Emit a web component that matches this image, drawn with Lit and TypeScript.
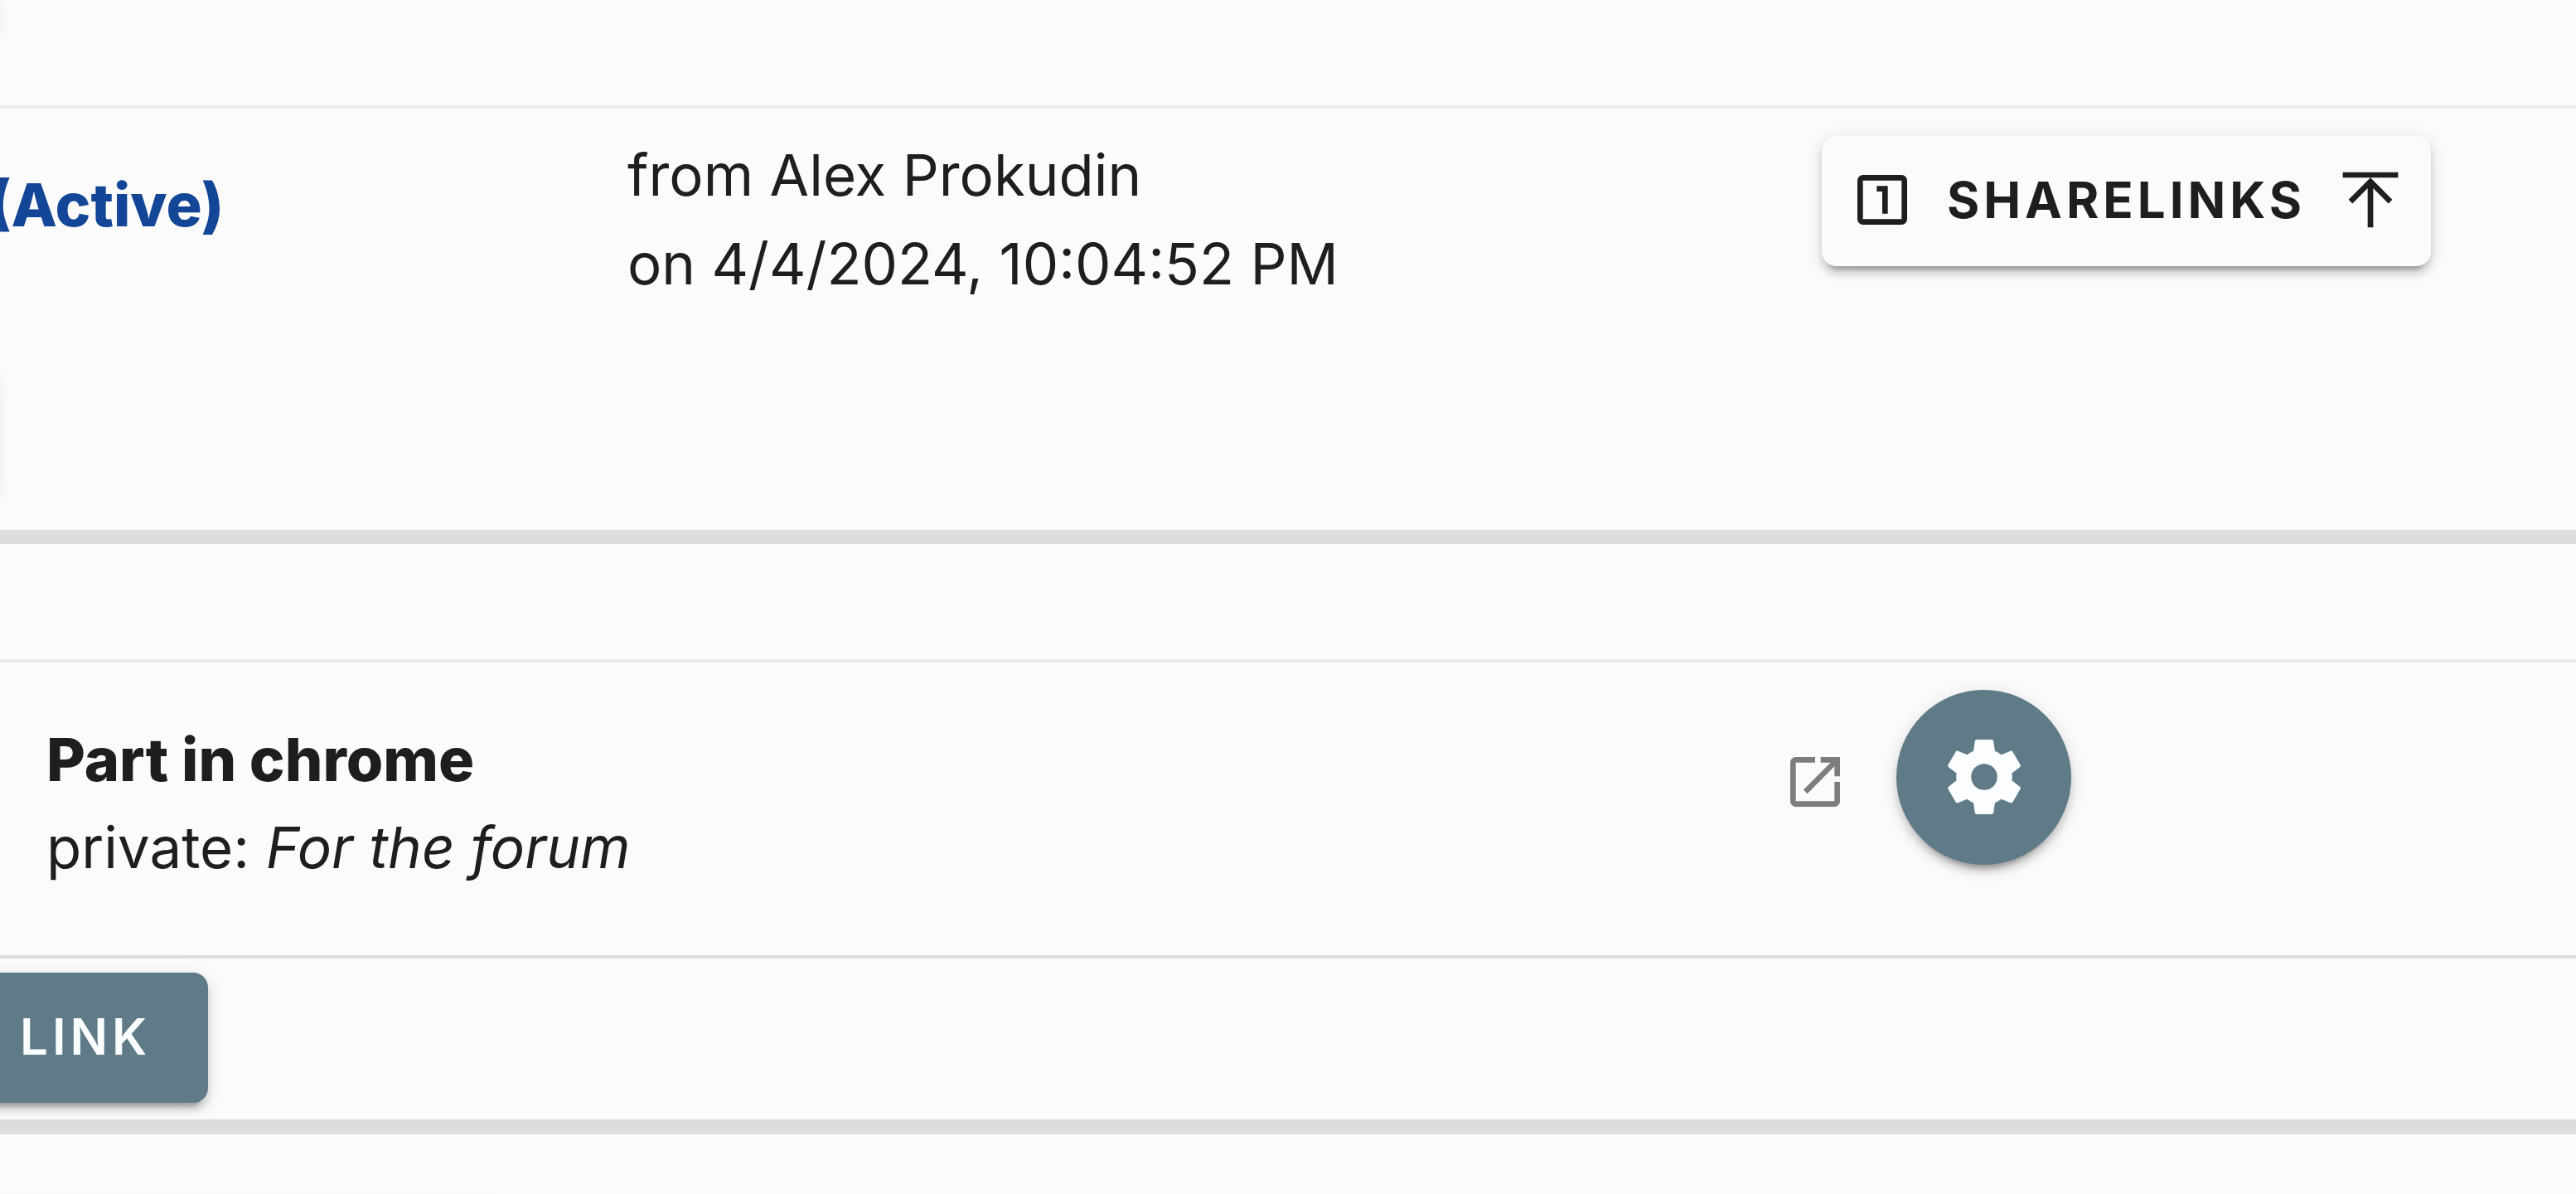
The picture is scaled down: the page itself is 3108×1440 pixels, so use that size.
import { LitElement, html, css, svg } from "lit";
import { customElement, property } from "lit/decorators.js";

const ICONS: Record<string, string> = {
  numeric: "M12,17V9H10V7H14V17H12M19,3A2,2 0 0,1 21,5V19A2,2 0 0,1 19,21H5A2,2 0 0,1 3,19V5A2,2 0 0,1 5,3H19M5,5V19H19V5H5Z",
  collapseUp: "M4.08,11.92L12,4L19.92,11.92L18.5,13.33L13,7.83V22H11V7.83L5.5,13.33L4.08,11.92M12,4H22V2H2V4H12Z",
  openInNew: "M14,3V5H17.59L7.76,14.83L9.17,16.24L19,6.41V10H21V3M19,19H5V5H12V3H5C3.89,3 3,3.9 3,5V19A2,2 0 0,0 5,21H19A2,2 0 0,0 21,19V12H19V19Z",
  cog: "M12,15.5A3.5,3.5 0 0,1 8.5,12A3.5,3.5 0 0,1 12,8.5A3.5,3.5 0 0,1 15.5,12A3.5,3.5 0 0,1 12,15.5M19.43,12.97C19.47,12.65 19.5,12.33 19.5,12C19.5,11.67 19.47,11.34 19.43,11L21.54,9.37C21.73,9.22 21.78,8.95 21.66,8.73L19.66,5.27C19.54,5.05 19.27,4.96 19.05,5.05L16.56,6.05C16.04,5.66 15.5,5.32 14.87,5.07L14.5,2.42C14.46,2.18 14.25,2 14,2H10C9.75,2 9.54,2.18 9.5,2.42L9.13,5.07C8.5,5.32 7.96,5.66 7.44,6.05L4.95,5.05C4.73,4.96 4.46,5.05 4.34,5.27L2.34,8.73C2.21,8.95 2.27,9.22 2.46,9.37L4.57,11C4.53,11.34 4.5,11.67 4.5,12C4.5,12.33 4.53,12.65 4.57,12.97L2.46,14.63C2.27,14.78 2.21,15.05 2.34,15.27L4.34,18.73C4.46,18.95 4.73,19.03 4.95,18.95L7.44,17.94C7.96,18.34 8.5,18.68 9.13,18.93L9.5,21.58C9.54,21.82 9.75,22 10,22H14C14.25,22 14.46,21.82 14.5,21.58L14.87,18.93C15.5,18.67 16.04,18.34 16.56,17.94L19.05,18.95C19.27,19.03 19.54,18.95 19.66,18.73L21.66,15.27C21.78,15.05 21.73,14.78 21.54,14.63L19.43,12.97Z",
};

@customElement("mdi-icon")
export class MdiIcon extends LitElement {
  @property() name = "";

  static styles = css`
    :host {
      display: block;
      width: 80px;
      height: 80px;
      flex: none;
    }
    .glyph {
      display: block;
      width: 100%;
      height: 100%;
      fill: currentColor;
    }
  `;

  render() {
    return html`<svg class="glyph" viewBox="0 0 24 24" aria-hidden="true">
      ${svg`<path d=${ICONS[this.name] ?? ""} />`}
    </svg>`;
  }
}

@customElement("app-root")
export class AppRoot extends LitElement {
  static styles = css`
    :host {
      --surface: #fbfbfb;
      --ink: #1e1e1e;
      --accent: #5f7b87;
      --hairline: #ececec;
      --divider: #dddddd;
      --raised: 0 13px 4px -9px rgba(0, 0, 0, 0.2), 0 9px 9px 0 rgba(0, 0, 0, 0.14),
        0 4px 22px 0 rgba(0, 0, 0, 0.12);
      display: flex;
      flex-direction: column;
      min-height: 100vh;
      overflow: hidden;
      background: var(--surface);
      color: var(--ink);
      font: 400 69px/107px Inter, Roboto, sans-serif;
    }
    .head {
      box-sizing: border-box;
      border-bottom: 4px solid var(--hairline);
    }
    .head-first {
      height: 131px;
    }
    .head-next {
      height: 143px;
    }
    /* Raised surfaces that begin beyond the left edge */
    .edge {
      width: 160px;
      height: 153px;
      margin-left: -166px;
      border-radius: 18px;
      background: var(--surface);
      box-shadow: var(--raised);
    }
    .edge-top {
      height: 40px;
      border-radius: 0 0 18px 18px;
    }
    .request {
      display: grid;
      grid-template-columns: 757fr 1441fr 910fr;
      align-items: start;
      padding-bottom: 39px;
      border-bottom: 17px solid var(--divider);
    }
    .state {
      display: grid;
      gap: 147px;
      padding-top: 62px;
    }
    .status {
      margin-left: -14px;
      color: #134696;
      font-size: 72px;
      font-weight: 800;
    }
    .meta {
      margin: 0;
      padding-top: 27px;
    }
    .btn {
      display: flex;
      align-items: center;
      height: 157px;
      margin: 0;
      padding: 0 33px 3px;
      border: 0;
      border-radius: 18px;
      background: var(--surface);
      box-shadow: var(--raised);
      color: var(--ink);
      font: 700 60px/72px Inter, Roboto, sans-serif;
      letter-spacing: 5px;
      white-space: nowrap;
    }
    .share {
      gap: 38px;
      justify-self: start;
      margin-top: 33px;
    }
    .part {
      display: grid;
      grid-template-columns: 2150fr 958fr;
      align-items: start;
      border-bottom: 4px solid var(--divider);
    }
    .about {
      margin: 0;
      padding: 64px 0 77px 56px;
      line-height: 105px;
    }
    .title {
      font-size: 72px;
      font-weight: 800;
    }
    .tools {
      display: flex;
      align-items: center;
      gap: 58px;
      padding-top: 33px;
    }
    .open {
      padding-top: 10px;
      color: #7b7d7e;
    }
    .fab {
      display: grid;
      place-items: center;
      width: 211px;
      height: 211px;
      padding: 0 0 2px;
      border: 0;
      border-radius: 50%;
      background: var(--accent);
      color: #fbfdff;
      box-shadow: var(--raised);
    }
    .fab mdi-icon {
      width: 108px;
      height: 108px;
    }
    .footer {
      display: flex;
      padding: 17px 0 20px;
      border-bottom: 18px solid var(--divider);
    }
    .link {
      margin-left: -44px;
      padding: 0 69px 3px 68px;
      background: var(--accent);
      color: #fbfdff;
      font-weight: 600;
    }
    .rest {
      flex: 1 1 0;
      min-height: 72px;
      overflow: hidden;
    }
    .next {
      width: 600px;
      height: 157px;
      margin-top: 86px;
      box-shadow: var(--raised);
    }
  `;

  render() {
    return html`
      <div class="head head-first"><div class="edge edge-top"></div></div>
      <section class="request">
        <div class="state">
          <strong class="status">(Active)</strong>
          <div class="edge"></div>
        </div>
        <p class="meta">from Alex Prokudin<br />on 4/4/2024, 10:04:52 PM</p>
        <button class="btn share" type="button">
          <mdi-icon name="numeric"></mdi-icon>
          <span>SHARELINKS</span>
          <mdi-icon name="collapseUp"></mdi-icon>
        </button>
      </section>
      <div class="head head-next"></div>
      <section class="part">
        <p class="about"><strong class="title">Part in chrome</strong><br />private: <em>For the forum</em></p>
        <div class="tools">
          <a class="open" href="#open" aria-label="Open"><mdi-icon name="openInNew"></mdi-icon></a>
          <button class="fab" type="button" aria-label="Settings"><mdi-icon name="cog"></mdi-icon></button>
        </div>
      </section>
      <div class="footer"><button class="btn link" type="button">LINK</button></div>
      <div class="rest"><div class="next"></div></div>
    `;
  }
}
